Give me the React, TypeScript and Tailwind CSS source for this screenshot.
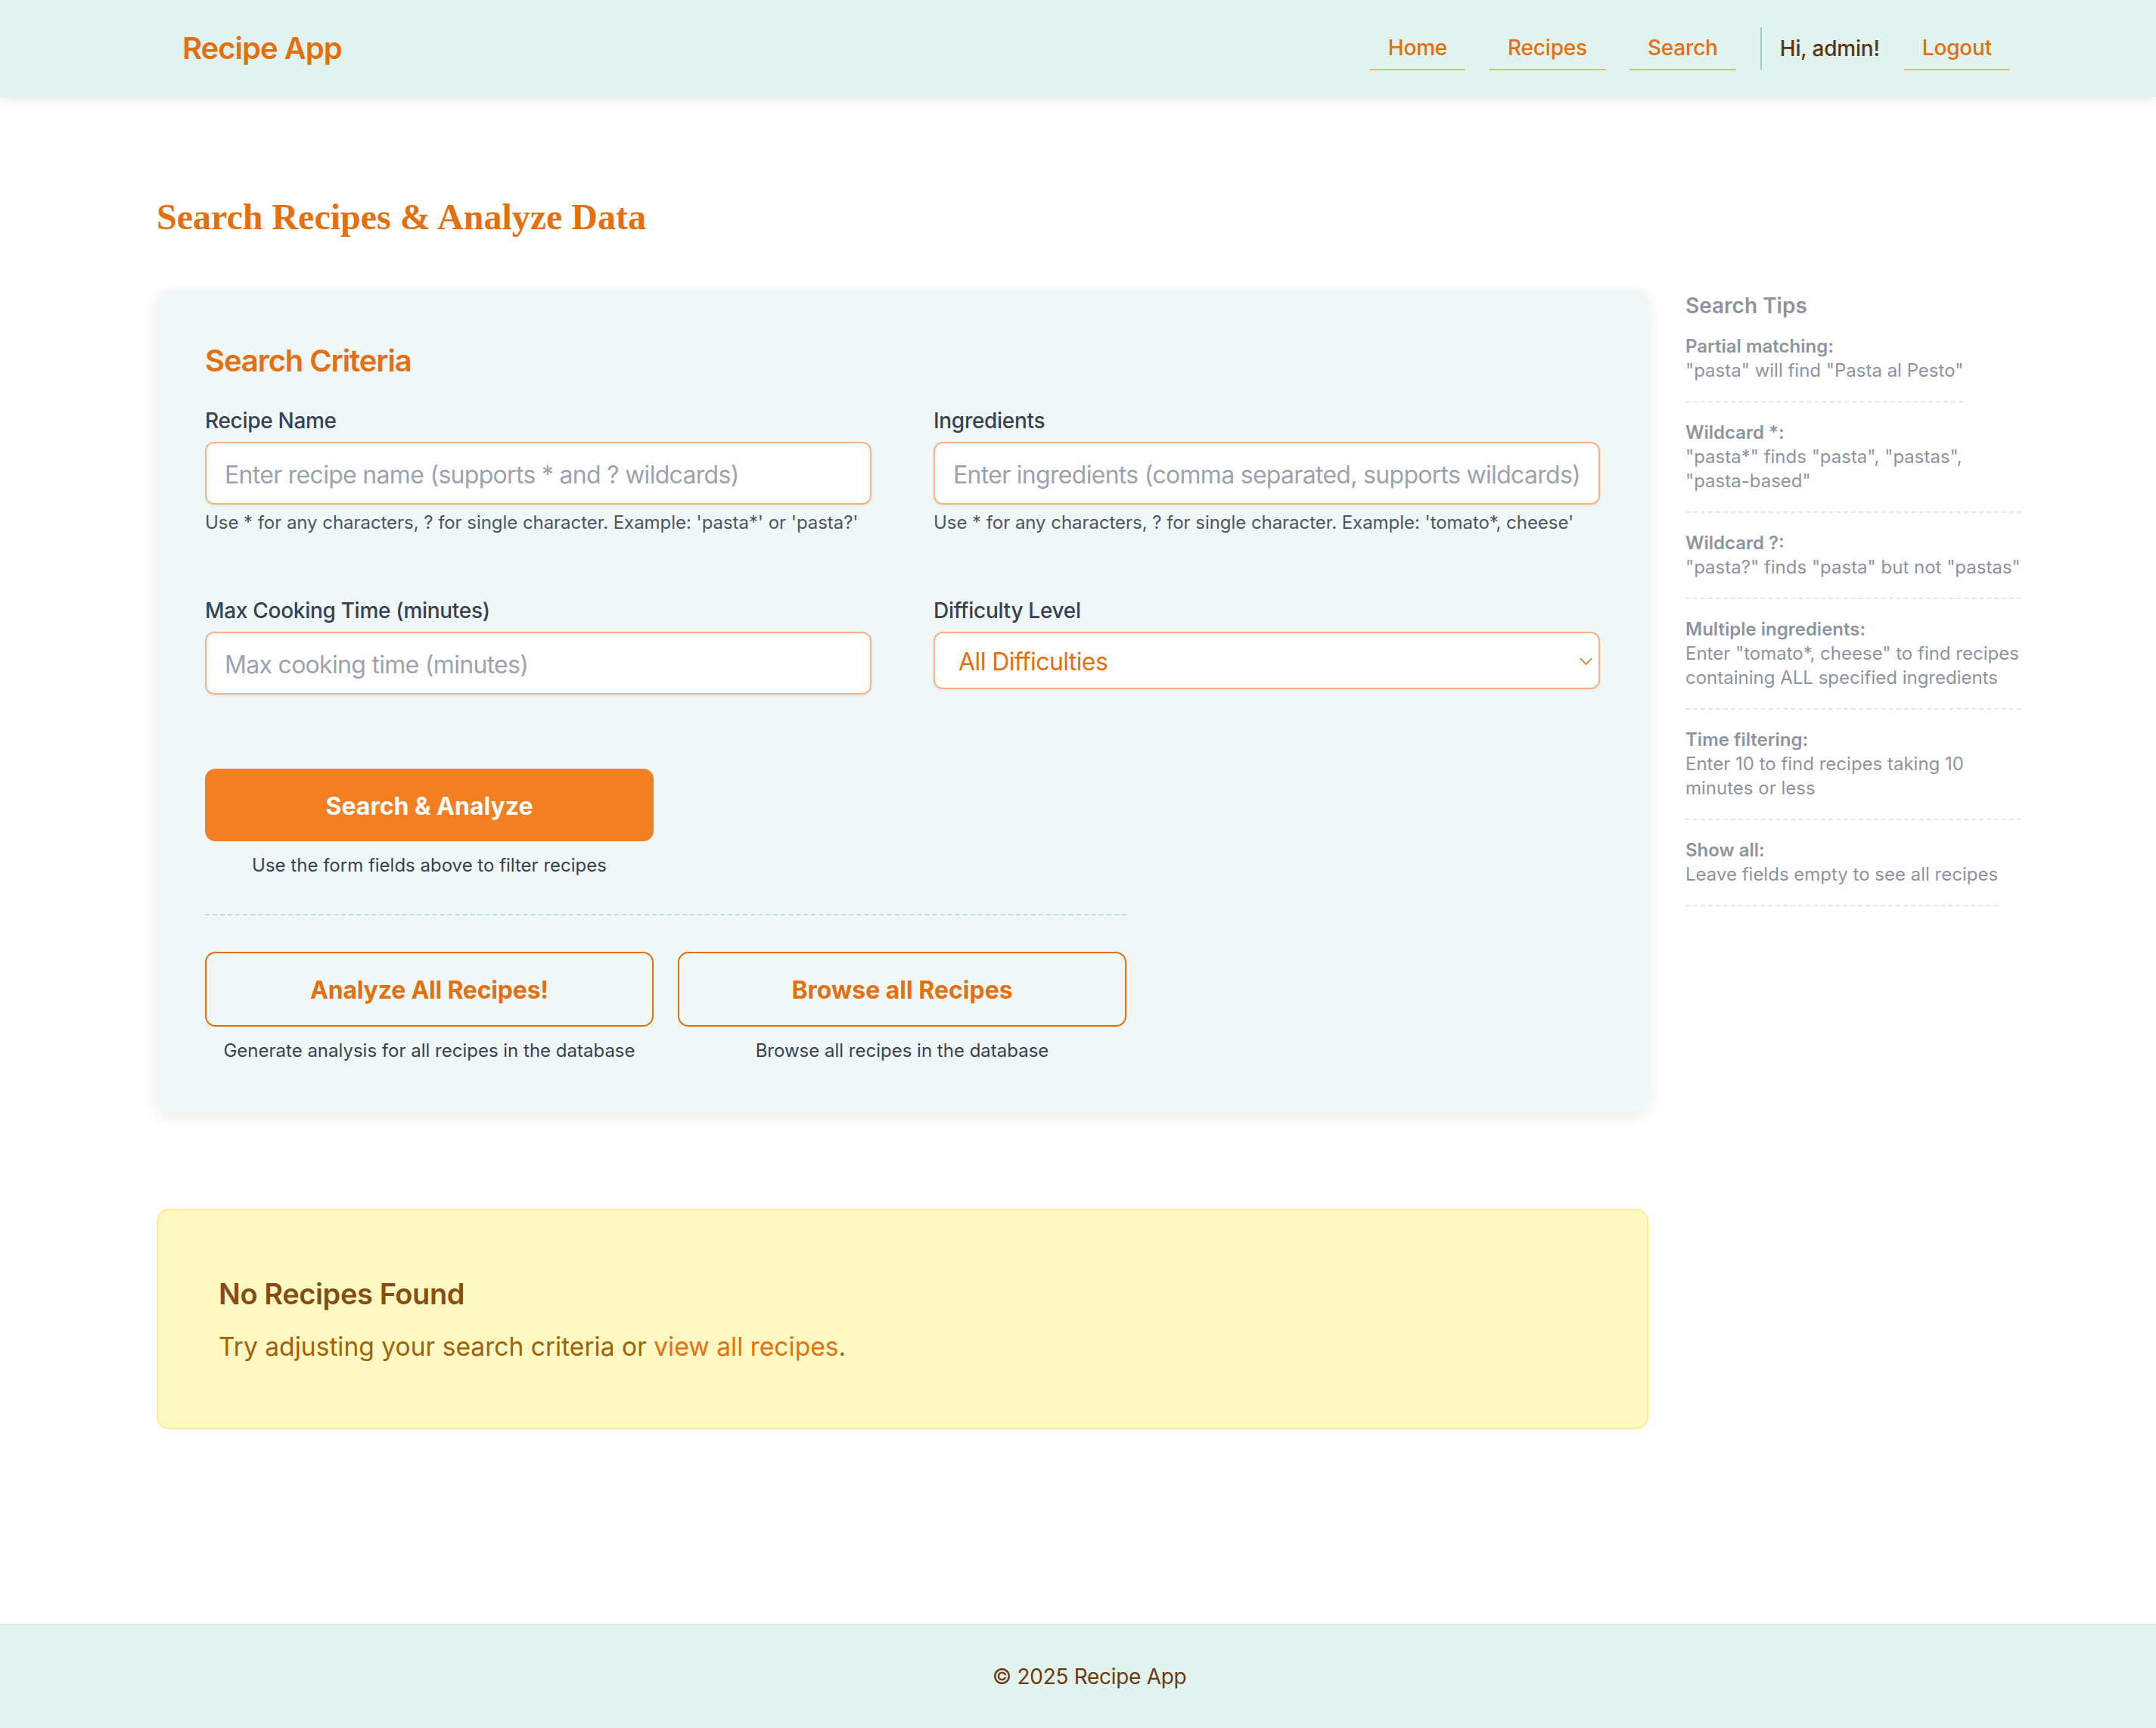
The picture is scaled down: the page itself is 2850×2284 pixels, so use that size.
import React from "react";

const orange = "text-[#e46f0f]";

interface Tip {
  title: string;
  lines: string[];
  full?: boolean;
}

const tips: Tip[] = [
  { title: "Partial matching:", lines: ['"pasta" will find "Pasta al Pesto"'] },
  { title: "Wildcard *:", lines: ['"pasta*" finds "pasta", "pastas",', '"pasta-based"'], full: true },
  { title: "Wildcard ?:", lines: ['"pasta?" finds "pasta" but not "pastas"'], full: true },
  {
    title: "Multiple ingredients:",
    lines: ['Enter "tomato*, cheese" to find recipes', "containing ALL specified ingredients"],
    full: true,
  },
  { title: "Time filtering:", lines: ["Enter 10 to find recipes taking 10", "minutes or less"], full: true },
  { title: "Show all:", lines: ["Leave fields empty to see all recipes"] },
];

function NavLink({ label }: { label: string }) {
  return (
    <a className="flex h-[58px] items-center border-b-2 border-[#f8ae78] px-[24px] text-[28px] font-medium tracking-[-0.2px] text-[#e46f0f]">
      {label}
    </a>
  );
}

function Field({
  label,
  placeholder,
  help,
}: {
  label: string;
  placeholder: string;
  help?: string;
}) {
  return (
    <div>
      <label className="mb-[8px] block text-[28px] font-medium leading-[40px] tracking-[-0.3px] text-[#374151]">
        {label}
      </label>
      <input
        placeholder={placeholder}
        className="block h-[83px] w-full rounded-[12px] border-2 border-[#f9b27f] bg-white px-[24px] pt-[4px] text-[32px] tracking-[-0.7px] text-[#374151] shadow-[0_2px_4px_rgba(0,0,0,0.06)] outline-none placeholder:text-[#9ca3af]"
      />
      {help && <p className="mt-[8px] text-[24px] leading-[32px] tracking-[-0.05px] text-[#4b5563]">{help}</p>}
    </div>
  );
}

export default function App() {
  return (
    <div className="flex min-h-screen flex-col bg-white font-['Inter',sans-serif]">
      <header className="relative z-10 flex h-[128px] items-center justify-between bg-[#e0f3ee] pl-[241px] pr-[193px] shadow-[0_4px_14px_rgba(0,0,0,0.09)]">
        <span className={`text-[40px] font-semibold tracking-[-1px] ${orange}`}>Recipe App</span>
        <nav className="flex items-center gap-[32px]">
          <NavLink label="Home" />
          <NavLink label="Recipes" />
          <NavLink label="Search" />
          <span className="flex h-[56px] items-center border-l-2 border-[#8fd4c0] pl-[24px] text-[28px] font-medium tracking-[-0.2px] text-[#5a3412]">
            Hi, admin!
          </span>
          <NavLink label="Logout" />
        </nav>
      </header>

      <main className="flex-1 pl-[207px] pt-[130px]">
        <h1 className={`mb-[68px] font-['Liberation_Serif',serif] text-[48px] font-bold leading-[58px] ${orange}`}>
          Search Recipes &amp; Analyze Data
        </h1>

        <div className="flex items-start gap-[49px]">
          <div className="w-[1972px]">
            <section className="rounded-[16px] bg-[#eff8f6] p-[64px] shadow-[0_6px_24px_rgba(0,0,0,0.09)]">
              <h2 className={`mb-[35px] mt-[5px] text-[40px] font-semibold leading-[48px] tracking-[-1.1px] ${orange}`}>
                Search Criteria
              </h2>

              <div className="grid grid-cols-2 gap-x-[82px] gap-y-[80px]">
                <Field
                  label="Recipe Name"
                  placeholder="Enter recipe name (supports * and ? wildcards)"
                  help="Use * for any characters, ? for single character. Example: 'pasta*' or 'pasta?'"
                />
                <Field
                  label="Ingredients"
                  placeholder="Enter ingredients (comma separated, supports wildcards)"
                  help="Use * for any characters, ? for single character. Example: 'tomato*, cheese'"
                />
                <Field label="Max Cooking Time (minutes)" placeholder="Max cooking time (minutes)" />
                <div>
                  <label className="mb-[8px] block text-[28px] font-medium leading-[40px] tracking-[-0.3px] text-[#374151]">
                    Difficulty Level
                  </label>
                  <div className="relative">
                    <select
                      className={`block h-[76px] w-full appearance-none rounded-[12px] border-2 border-[#f9b27f] bg-white pl-[31px] pt-[4px] text-[32px] tracking-[-0.6px] shadow-[0_2px_4px_rgba(0,0,0,0.06)] outline-none ${orange}`}
                    >
                      <option>All Difficulties</option>
                      <option>Easy</option>
                      <option>Medium</option>
                      <option>Hard</option>
                    </select>
                    <svg
                      className="pointer-events-none absolute right-[10px] top-[34px]"
                      width="17"
                      height="10"
                      viewBox="0 0 17 10"
                      fill="none"
                    >
                      <path d="M1 1l7.5 8L16 1" stroke="#e46f0f" strokeWidth="1.6" />
                    </svg>
                  </div>
                </div>
              </div>

              <div className="mt-[98px] w-[1218px]">
                <div className="grid grid-cols-2 gap-x-[32px]">
                  <div>
                    <button className="h-[96px] w-full rounded-[14px] bg-[#f47f22] pt-[3px] text-[32px] font-bold text-white">
                      Search &amp; Analyze
                    </button>
                    <p className="mt-[16px] text-center text-[24px] leading-[32px] text-[#374151]">
                      Use the form fields above to filter recipes
                    </p>
                  </div>
                </div>

                <div className="my-[48px] border-t-2 border-dashed border-[#b9e5d9]" />

                <div className="grid grid-cols-2 gap-x-[32px]">
                  <div>
                    <button className={`h-[99px] w-full rounded-[14px] border-2 border-[#e46f0f] pt-[3px] text-[32px] font-bold tracking-[-0.2px] ${orange}`}>
                      Analyze All Recipes!
                    </button>
                    <p className="mt-[16px] text-center text-[24px] leading-[32px] text-[#374151]">
                      Generate analysis for all recipes in the database
                    </p>
                  </div>
                  <div>
                    <button className={`h-[99px] w-full rounded-[14px] border-2 border-[#e46f0f] pt-[3px] text-[32px] font-bold ${orange}`}>
                      Browse all Recipes
                    </button>
                    <p className="mt-[16px] text-center text-[24px] leading-[32px] text-[#374151]">
                      Browse all recipes in the database
                    </p>
                  </div>
                </div>
              </div>
            </section>

            <section className="mt-[129px] rounded-[16px] border-2 border-[#fdec8f] bg-[#fef8c3] px-[80px] pb-[83px] pt-[86px]">
              <h3 className="mb-[22px] text-[38px] font-semibold leading-[48px] tracking-[-0.4px] text-[#854d0e]">
                No Recipes Found
              </h3>
              <p className="text-[33.6px] leading-[48px] text-[#a16207]">
                Try adjusting your search criteria or <a className="text-[#e8700f]">view all recipes</a>.
              </p>
            </section>
          </div>

          <aside className="w-[444px] text-[#8e949f]">
            <h3 className="mb-[18px] text-[28px] font-semibold leading-[40px]">Search Tips</h3>
            {tips.map((t) => (
              <div
                key={t.title}
                className={`mb-[24px] border-b-2 border-dashed border-[#e5e7eb] pb-[24px] text-[24px] leading-[32px] ${
                  t.full ? "w-full" : "w-fit"
                }`}
              >
                <strong className="block font-semibold">{t.title}</strong>
                {t.lines.map((l) => (
                  <div key={l} className="whitespace-nowrap">
                    {l}
                  </div>
                ))}
              </div>
            ))}
          </aside>
        </div>
      </main>

      <footer className="border-t-2 border-[#e5e7eb] bg-[#e0f3ee] py-[48px] pl-[30px] text-center text-[28px] leading-[40px] tracking-[-0.3px] text-[#6b3a12]">
        © 2025 Recipe App
      </footer>
    </div>
  );
}
